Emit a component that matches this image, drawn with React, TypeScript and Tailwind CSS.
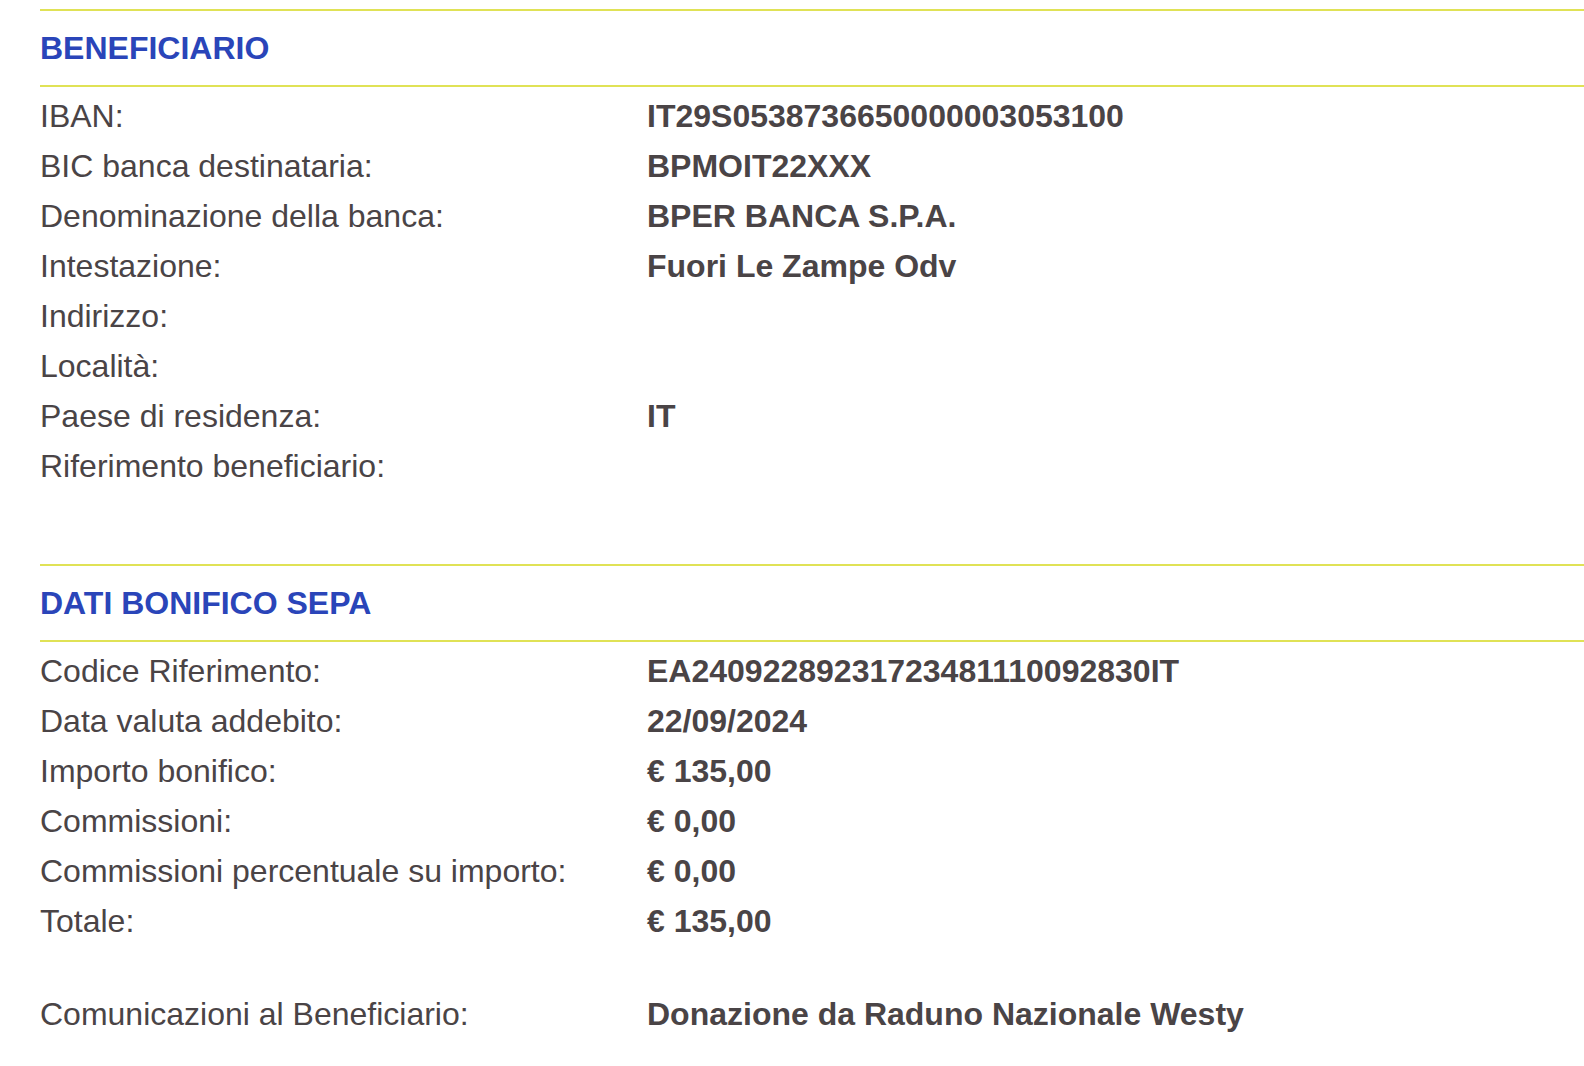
import React from 'react';

type Row = { label: string; value?: string };

const beneficiario: Row[] = [
  { label: 'IBAN:', value: 'IT29S0538736650000003053100' },
  { label: 'BIC banca destinataria:', value: 'BPMOIT22XXX' },
  { label: 'Denominazione della banca:', value: 'BPER BANCA S.P.A.' },
  { label: 'Intestazione:', value: 'Fuori Le Zampe Odv' },
  { label: 'Indirizzo:' },
  { label: 'Località:' },
  { label: 'Paese di residenza:', value: 'IT' },
  { label: 'Riferimento beneficiario:' },
];

const bonifico: Row[] = [
  { label: 'Codice Riferimento:', value: 'EA24092289231723481110092830IT' },
  { label: 'Data valuta addebito:', value: '22/09/2024' },
  { label: 'Importo bonifico:', value: '€ 135,00' },
  { label: 'Commissioni:', value: '€ 0,00' },
  { label: 'Commissioni percentuale su importo:', value: '€ 0,00' },
  { label: 'Totale:', value: '€ 135,00' },
];

const SectionHeader: React.FC<{ title: string }> = ({ title }) => (
  <div className="border-y-2 border-[#e0e256]">
    <h2 className="h-[74px] leading-[74px] text-[32px] font-bold text-[#2a45b9]">{title}</h2>
  </div>
);

const DataRow: React.FC<Row> = ({ label, value }) => (
  <div className="flex h-[50px] leading-[50px] text-[32px] text-[#4a4446]">
    <div className="w-[607px] shrink-0">{label}</div>
    <div className="font-bold">{value}</div>
  </div>
);

const App: React.FC = () => {
  return (
    <div
      className="min-h-screen bg-white pt-[9px] pl-[40px]"
      style={{ fontFamily: '"Liberation Sans", Arial, sans-serif' }}
    >
      <section className="mb-[73px]">
        <SectionHeader title="BENEFICIARIO" />
        <div className="pt-[4px]">
          {beneficiario.map((r) => (
            <DataRow key={r.label} {...r} />
          ))}
        </div>
      </section>

      <section>
        <SectionHeader title="DATI BONIFICO SEPA" />
        <div className="pt-[4px]">
          {bonifico.map((r) => (
            <DataRow key={r.label} {...r} />
          ))}
        </div>
        <div className="pt-[43px]">
          <DataRow label="Comunicazioni al Beneficiario:" value="Donazione da Raduno Nazionale Westy" />
        </div>
      </section>
    </div>
  );
};

export default App;
